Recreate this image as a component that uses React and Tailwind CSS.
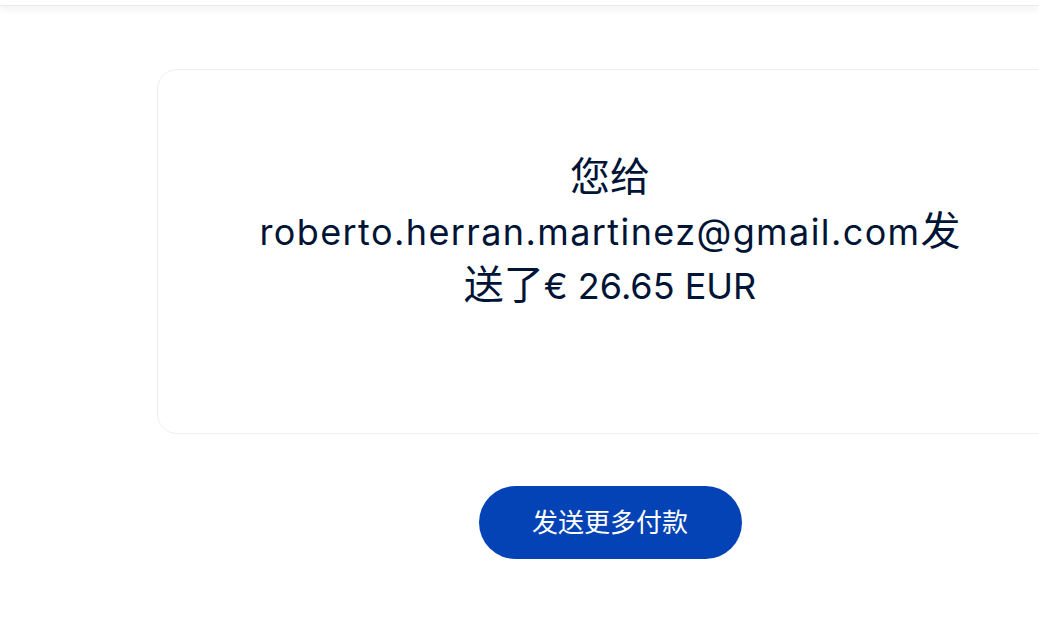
export default function App() {
  return (
    <div className="min-h-[618px] w-[1039px] overflow-hidden bg-white" style={{ fontFamily: 'Inter, "Noto Sans CJK SC", sans-serif' }}>
      <div className="h-[6px] bg-white shadow-[0_2px_8px_rgba(0,0,0,0.08)] border-b border-[#ececec]" />
      <div className="pl-[157px] pt-[63px]">
        <div className="w-[906px] rounded-[20px] border border-[#efefef] bg-white pt-[81px] pb-[120px] flex justify-center">
          <p className="w-[720px] text-center text-[36px] leading-[54px] text-[#001435]">
            <span className="text-[40px] leading-[40px]">您给</span> <span className="tracking-[1.4px]">roberto.herran.martinez@gmail.com</span><span className="text-[40px] leading-[40px]">发送了</span>€ 26.65 EUR
          </p>
        </div>
        <div className="w-[906px] flex justify-center pt-[52px]">
          <button className="w-[263px] h-[73px] rounded-full bg-[#0443b6] text-white text-[26px]">
            发送更多付款
          </button>
        </div>
      </div>
    </div>
  );
}
